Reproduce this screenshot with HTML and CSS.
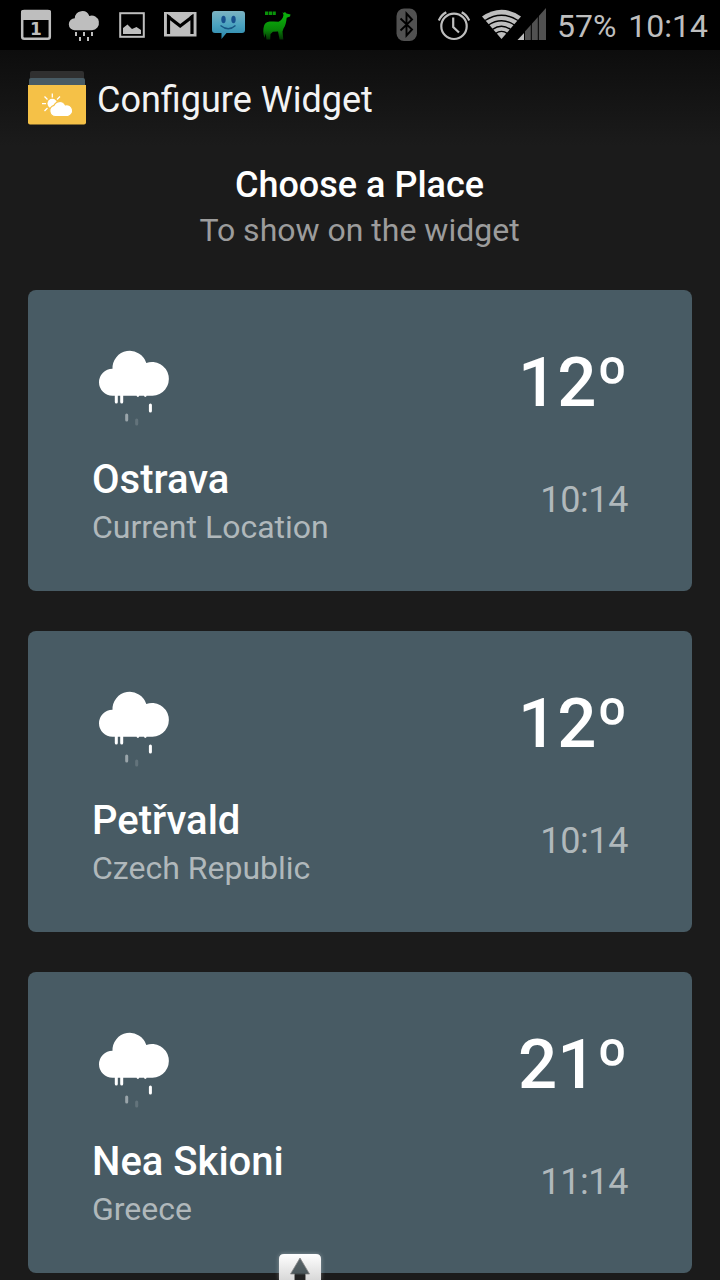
FILE: index.html
```html
<!DOCTYPE html>
<html lang="en">
  <head>
    <meta charset="UTF-8">
    <meta name="viewport" content="width=device-width, initial-scale=1.0" />
    <title>Configure Widget</title>
    <link rel="stylesheet" href="styles.css">
  </head>
  <body>
    <svg class="hide">
      <symbol id="rain" viewBox="0 0 110 100">
        <path fill="#fff" d="M32.5 60.800a13.500 13.500 0 0 1 0-27A17.300 17.300 0 0 1 66.300 28A16.900 16.900 0 1 1 72.500 60.800z" />
        <g stroke="#fff" stroke-width="3" stroke-linecap="round">
          <path d="M36.300 58v9M41.700 58v9M70.400 70v6" />
          <path d="M57.900 59v1.600M65.300 59v1.600" stroke-width="2.600" />
          <path d="M46.700 80v5" opacity=".45" />
          <path d="M56.700 85v4" opacity=".15" />
        </g>
      </symbol>
    </svg>

    <div class="status-bar">
      <div class="notifications">
        <svg viewBox="0 0 48 50">
          <rect x="10.200" y="11" width="27.600" height="27.800" rx="2" fill="none" stroke="#bebebe" stroke-width="2.500" />
          <path fill="#bebebe" d="M9 20v-8q0-2 2-2h26q2 0 2 2v8z" />
          <text x="24" y="34.500" class="day">1</text>
        </svg>
        <svg viewBox="0 0 48 50">
          <path fill="#bebebe" d="M14.800 30.200a6 6 0 0 1 0-12A7.500 7.500 0 0 1 29.300 16A7.300 7.300 0 1 1 32 30.200z" />
          <path stroke="#bebebe" stroke-width="2" d="M16 32v4M24 32v4M32 32v4M20 37v4M28 37v4" />
        </svg>
        <svg viewBox="0 0 48 50">
          <rect x="12.200" y="13.200" width="23.600" height="23.600" fill="none" stroke="#bebebe" stroke-width="2" />
          <path fill="#bebebe" d="M15 34v-6l4.500-3.500 4.500 4.500 4.500-2 4.500 3v4z" />
        </svg>
        <svg viewBox="0 0 48 50">
          <path fill="#bebebe" d="M8 12h32.500v24.500H8z" />
          <path fill="none" stroke="#000" stroke-width="3.200" d="M12.500 34V17L24.200 26 36 17v17" />
          <path fill="none" stroke="#000" stroke-width="1.500" d="M11.500 15l3 2M37 15l-3 2" />
        </svg>
        <svg viewBox="0 0 48 50">
          <linearGradient id="bubble" x2="0" y2="1">
            <stop offset="0" stop-color="#7cb3c2" />
            <stop offset=".5" stop-color="#4ba3c0" />
            <stop offset="1" stop-color="#2a86aa" />
          </linearGradient>
          <path fill="url(#bubble)" d="M11 11h27q3 0 3 3v16q0 3-3 3H22.500l-5 6v-6H11q-3 0-3-3V14q0-3 3-3z" />
          <ellipse cx="19.500" cy="19.500" rx="2.200" ry="3.700" fill="#17518e" />
          <ellipse cx="29.500" cy="19.500" rx="2.200" ry="3.700" fill="#17518e" />
          <path fill="none" stroke="#175684" stroke-width="1.400" d="M16.500 25.500q8 6.500 15 0" />
        </svg>
        <svg viewBox="0 0 48 50">
          <linearGradient id="llama" x2="0" y2="1">
            <stop offset=".2" stop-color="#0bac0b" />
            <stop offset=".65" stop-color="#088508" />
            <stop offset="1" stop-color="#043204" />
          </linearGradient>
          <path fill="url(#llama)" d="M30.500 12l1 1 1.500-1 1.500 1.500 4 1-.5 2-3.300 1.200c-.5 4-1 8-3.200 10.800l-1 3 .8 8h-3.700l-1.600-8-5 .2-2.500 2.300-.3 5.500h-3.700l-.8-6-1.200 4.500c-1.500-4-1.500-9-.5-12 1.500-4.500 5-4.900 9.500-4.400l5 .2c2.500-1 4.500-3.300 5-6.800z" />
          <path stroke="#0a940a" stroke-width="3.400" stroke-dasharray="3.200 .6" d="M13 13.200h11" />
        </svg>
      </div>
      <div class="system">
        <svg class="bluetooth" viewBox="0 0 22 50">
          <rect x="0.500" y="8.500" width="20.500" height="32.500" rx="7.500" fill="#515151" />
          <path fill="none" stroke="#000" stroke-width="1.900" d="M4.500 18.500L16 29.500 10.500 35.500V13.500L16 19.500 4.500 30.500" />
        </svg>
        <svg class="alarm" viewBox="0 0 34 50">
          <g fill="none" stroke="#bebebe" stroke-width="2.200">
            <circle cx="17" cy="26.300" r="12.700" />
            <path d="M16.200 17.500v9.500l5.800 5.500M1.800 20.500q2.500-5.500 7.500-8.200M32.200 20.500q-2.500-5.500-7.500-8.200" />
          </g>
        </svg>
        <svg class="signal" viewBox="0 0 64 50">
          <path fill="#bebebe" d="M0 16.500Q19.500 3 39 16.500L19.500 39z" />
          <g fill="none" stroke="#000" stroke-width="1.400">
            <path d="M3 20.500q16.500-10.500 33 0M6.500 25q13-8.500 26 0M10.500 29.300q9-6 18 0M13.500 33.600q6-4.500 12 0" />
          </g>
          <path fill="#515151" d="M42.500 33V32L64 8v32H42.500z" />
          <path fill="#bebebe" d="M35.500 40l7-7.500V40z" />
          <path stroke="#000" stroke-width="1" d="M42.500 25v15M49.300 20v20M56.300 14v26" />
        </svg>
        <span class="battery">57%</span>
        <span class="clock">10:14</span>
      </div>
    </div>

    <div class="action-bar">
      <svg class="app-icon" viewBox="0 0 60 56">
        <path fill="#303030" d="M3 10V3q0-2 2-2h50q2 0 2 2v7z" />
        <path fill="#485b64" d="M2 16v-6q0-2 2-2h52q2 0 2 2v6z" />
        <path fill="#f5c147" d="M1 15h58v37.500q0 2-2 2H3q-2 0-2-2z" />
        <path stroke="#fff" stroke-width="1.300" d="M25.300 23.500v4M17.500 26.500l3 3M33 26.500l-3 3M15 33.600h4M17.500 41l3-3" />
        <circle cx="25.300" cy="33.600" r="4.800" fill="#fff" />
        <path fill="#fff" stroke="#f5c147" stroke-width="1.200" d="M28.500 46.500a5.700 5.700 0 0 1-1.500-11.200A6.300 6.300 0 0 1 38.300 34.800A6 6 0 1 1 41 46.500z" />
      </svg>
      <h1>Configure Widget</h1>
    </div>

    <div class="heading">
      <h2>Choose a Place</h2>
      <p>To show on the widget</p>
    </div>

    <div class="places">
      <div class="card">
        <div class="row">
          <svg class="weather"><use href="#rain" /></svg>
          <div class="temp">12º</div>
        </div>
        <div class="row">
          <div>
            <div class="city">Ostrava</div>
            <div class="region">Current Location</div>
          </div>
          <div class="time">10:14</div>
        </div>
      </div>
      <div class="card">
        <div class="row">
          <svg class="weather"><use href="#rain" /></svg>
          <div class="temp">12º</div>
        </div>
        <div class="row">
          <div>
            <div class="city">Petřvald</div>
            <div class="region">Czech Republic</div>
          </div>
          <div class="time">10:14</div>
        </div>
      </div>
      <div class="card">
        <div class="row">
          <svg class="weather"><use href="#rain" /></svg>
          <div class="temp">21º</div>
        </div>
        <div class="row">
          <div>
            <div class="city">Nea Skioni</div>
            <div class="region">Greece</div>
          </div>
          <div class="time">11:14</div>
        </div>
      </div>
    </div>

    <!-- tab that sticks out over the bottom edge -->
    <svg class="pull-tab" viewBox="0 0 50 31">
      <linearGradient id="tab" x2="0" y2="1">
        <stop offset="0" stop-color="#fff" />
        <stop offset="1" stop-color="#d8d8d8" />
      </linearGradient>
      <linearGradient id="arrow" x2="0" y2="1">
        <stop offset="0" stop-color="#596468" />
        <stop offset=".65" stop-color="#4c585c" />
        <stop offset=".75" stop-color="#222" />
      </linearGradient>
      <path fill="url(#tab)" d="M4 31V10q0-5 5-5h32q5 0 5 5v21z" />
      <path fill="url(#arrow)" stroke="#888" stroke-width=".8" d="M25 9l9.500 16H30.500v7h-11v-7h-4z" />
    </svg>
  </body>
</html>
```
FILE: styles.css
```css
* {
  padding: 0;
  margin: 0;
  box-sizing: border-box;
}
body {
  height: 1280px;
  overflow: hidden;
  position: relative;
  background-color: #1b1b1b;
  color: #fff;
  font-family: Roboto, sans-serif;
}
svg {
  display: block;
  flex: none;
}
.hide {
  display: none;
}
.status-bar {
  display: flex;
  justify-content: space-between;
  height: 50px;
  padding: 0 12px;
  background-color: #000;
}
.notifications,
.system {
  display: flex;
}
.notifications svg {
  width: 48px;
  height: 50px;
}
.day {
  fill: #bebebe;
  font: bold 17px "DejaVu Sans", sans-serif;
  text-anchor: middle;
}
.system {
  color: #bebebe;
  font-size: 32px;
  line-height: 52px;
}
.system svg {
  height: 50px;
}
.bluetooth {
  width: 22px;
  margin-right: 19px;
}
.alarm {
  width: 34px;
  margin-right: 11px;
}
.signal {
  width: 64px;
  margin-right: 11px;
}
.battery {
  margin-right: 12px;
}
.action-bar {
  display: flex;
  align-items: center;
  height: 96px;
  padding-left: 27px;
  background: linear-gradient(#0d0d0d, #1b1b1b);
}
.app-icon {
  width: 60px;
  height: 56px;
}
.action-bar h1 {
  margin-left: 10px;
  padding-top: 4px;
  color: #f3f3f3;
  font-size: 36px;
  font-weight: 400;
  line-height: 44px;
}
.heading {
  height: 144px;
  padding: 18px 1px 0 0;
  text-align: center;
}
.heading h2 {
  font-size: 36px;
  font-weight: 500;
  line-height: 42px;
}
.heading p {
  margin-top: 5px;
  color: #9c9c9c;
  font-size: 32px;
  line-height: 38px;
}
.places {
  display: flex;
  flex-direction: column;
  gap: 40px;
  padding: 0 28px;
}
.card {
  height: 301px;
  padding: 45px 64px 0 52px;
  background-color: #485b64;
  border-radius: 8px;
}
.row {
  display: flex;
  justify-content: space-between;
}
.weather {
  width: 110px;
  height: 100px;
}
.temp {
  font-size: 69px;
  font-weight: 500;
  line-height: 95px;
}
.row + .row {
  margin-top: 20px;
  padding-left: 12px;
}
.city {
  padding-top: 1px;
  font-size: 40px;
  font-weight: 500;
  line-height: 48px;
}
.region {
  margin-top: 4px;
  color: #b0b8bb;
  font-size: 32px;
  line-height: 38px;
}
.time {
  color: #b0b8bb;
  font-size: 36px;
  letter-spacing: -0.4px;
  line-height: 90px;
}
.pull-tab {
  position: absolute;
  left: 275px;
  bottom: 0;
  width: 50px;
  height: 31px;
  filter: drop-shadow(0 0 2px rgba(255, 255, 255, 0.35));
}
```
